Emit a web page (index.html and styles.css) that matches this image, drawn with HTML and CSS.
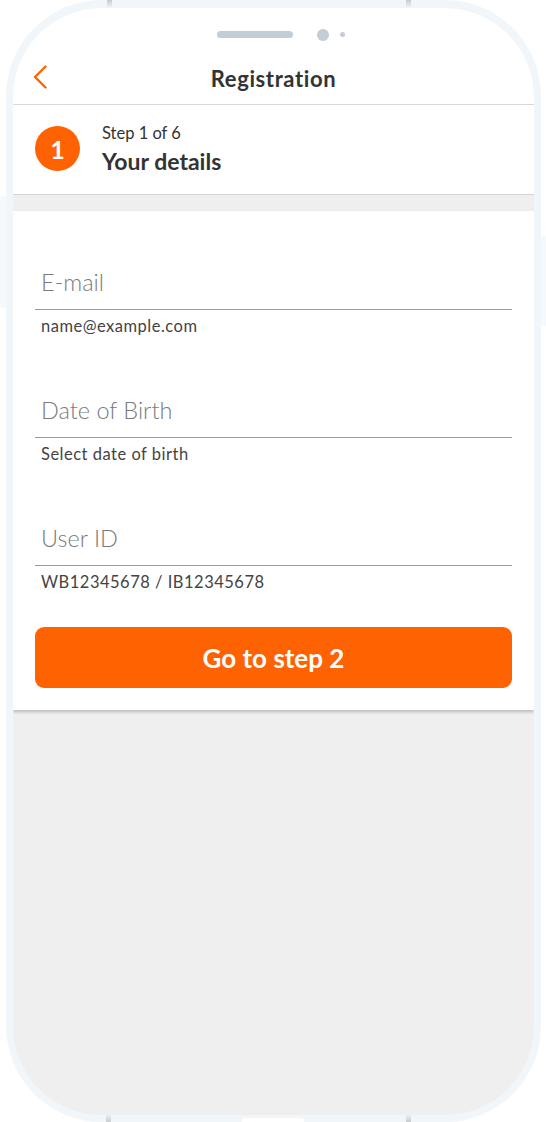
FILE: index.html
```html
<!DOCTYPE html>
<html lang="en">
<head>
<meta charset="utf-8">
<title>Registration</title>
<link rel="stylesheet" href="styles.css">
</head>
<body>
<div class="device">
  <span class="mark mark-tl"></span>
  <span class="mark mark-tr"></span>
  <span class="mark mark-bl"></span>
  <span class="mark mark-br"></span>
  <span class="side side-left"></span>
  <span class="side side-right"></span>
  <span class="home-tab"></span>
  <div class="screen">
    <header class="appbar">
      <div class="notch">
        <span class="speaker"></span>
        <span class="camera"></span>
        <span class="sensor"></span>
      </div>
      <div class="titlebar">
        <button class="back" aria-label="Back">
          <svg width="14" height="24" viewBox="0 0 14 24"><path d="M12.5 1.5 L2 12 L12.5 22.5" fill="none" stroke="#ff6200" stroke-width="2.4" stroke-linecap="round" stroke-linejoin="round"/></svg>
        </button>
        <h1 class="title">Registration</h1>
      </div>
    </header>
    <section class="step">
      <div class="step-badge">1</div>
      <div class="step-text">
        <div class="step-count">Step 1 of 6</div>
        <div class="step-name">Your details</div>
      </div>
    </section>
    <div class="gap-band"></div>
    <form class="card">
      <div class="field">
        <div class="input">E-mail</div>
        <div class="hint">name@example.com</div>
      </div>
      <div class="field">
        <div class="input">Date of Birth</div>
        <div class="hint">Select date of birth</div>
      </div>
      <div class="field">
        <div class="input">User ID</div>
        <div class="hint">WB12345678 / IB12345678</div>
      </div>
      <button type="button" class="primary">Go to step 2</button>
    </form>
  </div>
</div>
</body>
</html>
```

FILE: styles.css
```css
* { box-sizing: border-box; }
html, body { margin: 0; padding: 0; background: #ffffff; }
body { font-family: Lato, "Open Sans", sans-serif; color: #333333; }

.device {
  position: relative;
  margin-left: 6px;
  width: 535px;
  height: 1122px;
  border: 7px solid #f0f6f9;
  border-top-width: 8px;
  border-radius: 96px;
  background: #f0f6f9;
}

.mark {
  position: absolute;
  width: 5px;
  height: 7px;
  background: linear-gradient(#c9cdd0, #eceff1);
}
.mark-tl { top: -8px; left: 94px; }
.mark-tr { top: -8px; left: 393px; }
.mark-bl { bottom: -7px; left: 93px; background: linear-gradient(#eceff1, #c9cdd0); }
.mark-br { bottom: -7px; left: 393px; background: linear-gradient(#eceff1, #c9cdd0); }

.side {
  position: absolute;
  width: 6px;
  background: #f5f9fb;
  border-radius: 3px;
}
.side-left { left: -13px; top: 188px; height: 112px; }
.side-right { right: -13px; top: 228px; height: 90px; }

.home-tab {
  position: absolute;
  bottom: -7px;
  left: 229px;
  width: 62px;
  height: 4px;
  background: #ffffff;
  border-radius: 3px 3px 0 0;
}

.screen {
  width: 100%;
  height: 100%;
  border-radius: 89px;
  overflow: hidden;
  background: #efefef;
  display: flex;
  flex-direction: column;
}

.appbar {
  background: #ffffff;
  border-bottom: 1px solid #d9d9d9;
  height: 97px;
  display: flex;
  flex-direction: column;
}
.notch {
  height: 53px;
  display: flex;
  align-items: center;
  justify-content: center;
  padding-left: 15px;
}
.speaker {
  width: 76px;
  height: 7px;
  border-radius: 4px;
  background: #c3cdd5;
}
.camera {
  width: 12px;
  height: 12px;
  border-radius: 50%;
  background: #c3cdd5;
  margin-left: 24px;
}
.sensor {
  width: 5px;
  height: 5px;
  border-radius: 50%;
  background: #c3cdd5;
  margin-left: 11px;
}
.titlebar {
  position: relative;
  height: 38px;
  display: flex;
  align-items: center;
  justify-content: center;
  padding-bottom: 4px;
}
.back {
  position: absolute;
  left: 17px;
  top: 2px;
  width: 20px;
  height: 28px;
  padding: 0;
  border: 0;
  background: transparent;
  display: flex;
  align-items: center;
  justify-content: center;
}
.title {
  margin: 0;
  font-size: 22px;
  font-weight: 700;
  color: #333333;
  letter-spacing: 0.6px;
}

.step {
  background: #ffffff;
  height: 90px;
  border-bottom: 1px solid #d4d4d4;
  display: flex;
  align-items: center;
  padding-left: 22px;
  gap: 22px;
}
.step-badge {
  width: 45px;
  height: 45px;
  border-radius: 50%;
  background: #ff6200;
  color: #ffffff;
  font-size: 25px;
  font-weight: 700;
  display: flex;
  align-items: center;
  justify-content: center;
  margin-top: -2px;
}
.step-text { display: flex; flex-direction: column; margin-top: -2px; }
.step-count { font-size: 16.5px; line-height: 22px; color: #333333; }
.step-name { font-size: 23px; line-height: 30px; font-weight: 700; color: #333333; margin-top: 2px; }

.gap-band { height: 16px; background: #efefef; flex: none; }

.card {
  background: #ffffff;
  padding: 0 22px 22px;
  box-shadow: 0 2px 3px rgba(0, 0, 0, 0.22);
  display: flex;
  flex-direction: column;
  flex: none;
}
.field { margin-top: 58px; }
.field:first-child { margin-top: 56px; }
.input {
  font-size: 23.5px;
  font-weight: 300;
  line-height: 30px;
  color: #7a7a7a;
  padding: 0 6px 12px;
  border-bottom: 1px solid #9a9a9a;
}
.hint {
  font-size: 16.5px;
  line-height: 22px;
  color: #444444;
  padding-left: 6px;
  margin-top: 5px;
  letter-spacing: 0.5px;
}
.primary {
  margin-top: 34px;
  height: 61px;
  border: 0;
  border-radius: 9px;
  background: #ff6200;
  color: #ffffff;
  font-family: Lato, "Open Sans", sans-serif;
  font-size: 26px;
  font-weight: 700;
}
```
